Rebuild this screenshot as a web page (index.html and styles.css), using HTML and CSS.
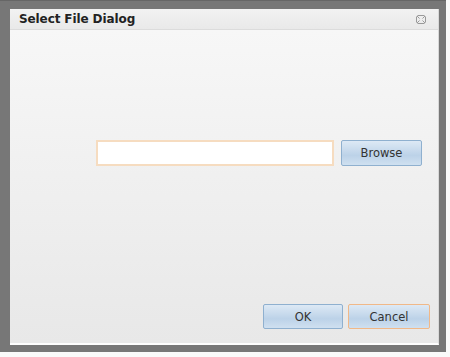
FILE: index.html
```html
<!DOCTYPE html>
<html>
<head>
<meta charset="utf-8">
<link rel="stylesheet" href="styles.css">
</head>
<body>
<div class="frame">
  <div class="dialog">
    <div class="titlebar">
      <span class="title">Select File Dialog</span>
      <svg class="close" width="10" height="9" viewBox="0 0 10 9">
        <path d="M1 1 L3.5 3.5 M9 1 L6.5 3.5 M1 8 L3.5 5.5 M9 8 L6.5 5.5 M1.5 0.5 H8.5 M1.5 8.5 H8.5 M0.5 1.5 V7.5 M9.5 1.5 V7.5" stroke="#999" stroke-width="1" fill="none"/>
      </svg>
    </div>
    <div class="body">
      <div class="filerow">
        <div class="fileinput"></div>
        <button class="btn browse">Browse</button>
      </div>
      <div class="actions">
        <button class="btn ok">OK</button>
        <button class="btn cancel">Cancel</button>
      </div>
    </div>
  </div>
</div>
</body>
</html>
```
FILE: styles.css
```css
html, body {
  margin: 0;
  padding: 0;
  background: #fafafa;
}
.frame {
  width: 446px;
  height: 352px;
  box-sizing: border-box;
  background: #777;
  padding: 8px 7px 9px 10px;
  border-top: 1px solid #666;
}
.dialog {
  height: 100%;
  display: flex;
  flex-direction: column;
  background: linear-gradient(#f8f8f8, #e8e8e8);
  border-right: 1px solid #d8d8d8;
  border-bottom: 2px solid #fdfdfd;
}
.titlebar {
  height: 20px;
  display: flex;
  align-items: center;
  justify-content: space-between;
  padding: 0 12px 0 9px;
  background: linear-gradient(#f2f2f2, #e9e9e9);
  border-bottom: 1px solid #dcdcdc;
}
.title {
  font-family: "DejaVu Sans", sans-serif;
  font-weight: bold;
  font-size: 12px;
  color: #222;
  letter-spacing: -0.1px;
}
.close {
  display: block;
}
.body {
  flex: 1;
  display: flex;
  flex-direction: column;
}
.filerow {
  display: flex;
  gap: 7px;
  margin: 110px 0 0 86px;
}
.fileinput {
  width: 234px;
  height: 22px;
  background: #fff;
  border: 2px solid #f6dcc0;
}
.btn {
  font-family: "DejaVu Sans", sans-serif;
  font-size: 11.5px;
  color: #333;
  height: 26px;
  border: 1px solid #8fb0cf;
  border-radius: 2px;
  background: linear-gradient(#dde9f5, #bcd2e8 60%, #cfe0f0);
  padding: 0;
}
.browse {
  width: 81px;
}
.actions {
  margin-top: auto;
  margin-bottom: 14px;
  display: flex;
  justify-content: flex-end;
  gap: 5px;
  padding-right: 8px;
}
.ok {
  width: 80px;
  height: 25px;
}
.cancel {
  width: 82px;
  height: 25px;
  border: 1px solid #f0b888;
}
```
